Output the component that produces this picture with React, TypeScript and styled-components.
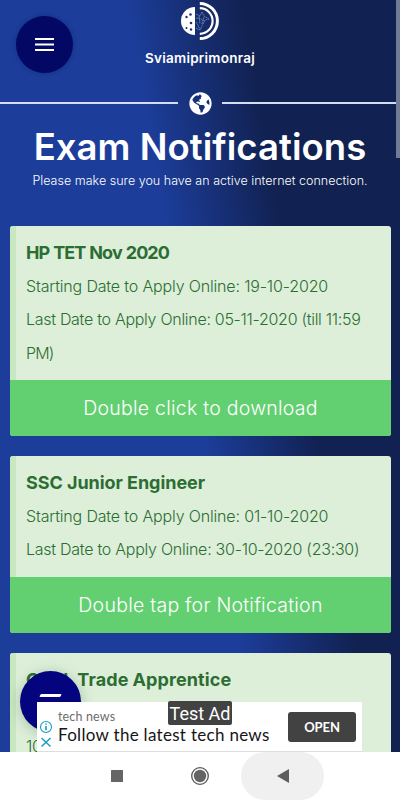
import React from "react";
import styled, { createGlobalStyle } from "styled-components";
import { FaGlobeAmericas } from "react-icons/fa";

const Global = createGlobalStyle`
  * { box-sizing: border-box; }
  html, body { margin: 0; padding: 0; overflow: hidden; }
  body { font-family: Inter, "Open Sans", sans-serif; }
  h1, h2, p { margin: 0; }
  button { font-family: inherit; }
`;

const Screen = styled.div`
  width: 400px;
  height: 800px;
  overflow: hidden;
  display: flex;
  flex-direction: column;
  background: #fff;
`;

const Page = styled.main`
  position: relative;
  height: 752px;
  flex: none;
  overflow: hidden;
  background: linear-gradient(80deg, #1c3d9a 48.5%, #112151 70.5%);
`;

const Header = styled.header`
  display: flex;
  flex-direction: column;
  align-items: center;
  color: #fff;
  height: 226px;
`;

const Logo = styled.svg`
  display: block;
  flex: none;
  width: 42px;
  height: 42px;
`;

const Text = styled.span<{ $size: number; $weight: number; $line: number; $space?: number }>`
  display: block;
  font-size: ${(p) => p.$size}px;
  font-weight: ${(p) => p.$weight};
  line-height: ${(p) => p.$line}px;
  letter-spacing: ${(p) => p.$space ?? 0}px;
  white-space: nowrap;
`;

const Brand = styled(Text)`
  margin-top: 6px;
`;

const Divider = styled.div`
  display: grid;
  grid-template-columns: 178px 1fr 178px;
  align-items: center;
  justify-items: center;
  width: 100%;
  height: 26px;
  margin-top: 22px;
  margin-bottom: 6px;
`;

const Rule = styled.span`
  width: 100%;
  height: 2px;
  background: #d3def3;
`;

const List = styled.section`
  display: flex;
  flex-direction: column;
  gap: 20px;
  padding: 0 9px 0 10px;
`;

const Card = styled.article`
  border-radius: 3px;
  overflow: hidden;
  background: #ddefd9;
  flex: none;
`;

const Info = styled.div<{ $height: number }>`
  height: ${(p) => p.$height}px;
  border-left: 6px solid #c9e7c1;
  padding: 10px 0 0 10px;
  color: #2c6d33;
`;

const Title = styled(Text)<{ $word?: number }>`
  word-spacing: ${(p) => p.$word ?? 0}px;
`;

const Detail = styled(Text)<{ $skip?: number }>`
  margin-top: ${(p) => p.$skip ?? 0}px;
`;

const Download = styled.button`
  display: flex;
  align-items: center;
  justify-content: center;
  width: 100%;
  height: 56px;
  border: 0;
  padding: 0;
  background: #62d071;
  color: #fff;
`;

const MenuButton = styled.button`
  position: absolute;
  left: 16px;
  top: 16px;
  width: 57px;
  height: 57px;
  padding: 0;
  border: 0;
  border-radius: 50%;
  background: #020863;
  box-shadow: 0 0 5px #02086350;
  display: flex;
  align-items: center;
  justify-content: center;
`;

const Fab = styled.button`
  position: absolute;
  left: 20px;
  top: 671px;
  width: 61px;
  height: 61px;
  border: 0;
  border-radius: 50%;
  background: #04047f;
  box-shadow: 0 2px 14px #00400040;
  display: flex;
  justify-content: center;
  align-items: flex-start;
  padding: 23px 0 0;
`;

const FabBar = styled.i`
  width: 21px;
  height: 3px;
  border-radius: 1px;
  background: #fff;
  transform: skewX(-25deg);
`;

const Ad = styled.aside`
  position: absolute;
  left: 37px;
  top: 702px;
  width: 325px;
  height: 50px;
  background: #fff;
  border-bottom: 1px solid #ddd;
  display: flex;
  align-items: center;
  padding: 0 6px 0 2px;
  font-family: Lato, sans-serif;
`;

const AdMarks = styled.svg`
  display: block;
  width: 14px;
  height: 32px;
  align-self: flex-end;
`;

const AdCopy = styled.div`
  flex: 1;
  padding: 1px 0 0 5px;
`;

const Sponsor = styled(Text)`
  color: #6c6c6c;
`;

const Headline = styled(Text)`
  color: #151515;
`;

const Open = styled.button`
  width: 68px;
  height: 30px;
  border: 0;
  border-radius: 3px;
  padding: 0;
  background: #424242;
  color: #fff;
`;

const Badge = styled.div`
  position: absolute;
  left: 131px;
  top: -1px;
  width: 64px;
  height: 24px;
  border-radius: 2px;
  background: #424242;
  color: #fff;
  text-align: center;
  white-space: nowrap;
  font: 400 18px/26px Roboto, sans-serif;
`;

const Scroll = styled.div`
  position: absolute;
  right: 0;
  top: 0;
  width: 4px;
  height: 158px;
  background: #707b98;
`;

const Nav = styled.nav`
  height: 48px;
  display: flex;
  padding-left: 75px;
  background: #fff;
`;

const NavItem = styled.span<{ $active?: boolean }>`
  width: 83px;
  height: 48px;
  border-radius: 26px;
  display: flex;
  align-items: center;
  justify-content: center;
  background: ${(p) => (p.$active ? "#f0f0f0" : "transparent")};
`;

type Line = { text: string; space: number; skip?: number };
type Notice = { title: string; space: number; word?: number; height: number; lines: Line[]; action?: string };

const notices: Notice[] = [
  {
    title: "HP TET Nov 2020",
    space: -0.9,
    word: 0.5,
    height: 154,
    lines: [
      { text: "Starting Date to Apply Online: 19-10-2020", space: -0.16 },
      { text: "Last Date to Apply Online: 05-11-2020 (till 11:59", space: -0.29 },
      { text: "PM)", space: -0.9 },
    ],
    action: "Double click to download",
  },
  {
    title: "SSC Junior Engineer",
    space: -0.05,
    height: 121,
    lines: [
      { text: "Starting Date to Apply Online: 01-10-2020", space: -0.16 },
      { text: "Last Date to Apply Online: 30-10-2020 (23:30)", space: -0.26 },
    ],
    action: "Double tap for Notification",
  },
  {
    title: "CCLL Trade Apprentice",
    space: 0.12,
    word: -0.5,
    height: 154,
    lines: [{ text: "10", space: -0.2, skip: 33.7 }],
  },
];

export default function App() {
  return (
    <Screen>
      <Global />
      <Page>
        <Header>
          <Logo viewBox="0 0 42 42" fill="none">
            <path d="M16 7A14 14 0 0 0 16 35Z" fill="#fff" />
            <g fill="#1b3274">
              <circle cx="7.500" cy="17" r="1.2" />
              <circle cx="11.500" cy="14.500" r="1.3" />
              <circle cx="12" cy="23" r="1.3" />
              <circle cx="7.500" cy="28" r="1" />
              <circle cx="12" cy="29.500" r="1.2" />
            </g>
            <path d="M19 3.400A17.600 17.600 0 0 1 19 38.600" transform="translate(1.800 0)" stroke="#fff" strokeWidth="3" />
            <path d="M19 8.200A12.800 12.800 0 0 1 19 33.800" transform="translate(1.800 0)" stroke="#fff" strokeWidth="2.200" />
            <path
              d="M17 14l4 2 2-4 2 4 5 3-4 1-2 4-3 6-2-5-2-3M17 18l5 1 3 2M20 16l1 8M25 17l-2 7M17 28l3 2"
              stroke="#8b9cc9"
              strokeWidth=".7"
              strokeDasharray="2 .6"
            />
          </Logo>
          <Brand $size={13.5} $weight={600} $line={20} $space={0.25}>Sviamiprimonraj</Brand>
          <Divider>
            <Rule />
            <FaGlobeAmericas size={23} />
            <Rule />
          </Divider>
          <Text as="h1" $size={36.5} $weight={600} $line={50} $space={0.05}>Exam Notifications</Text>
          <Text as="p" $size={12.5} $weight={300} $line={18} $space={0.02}>
            Please make sure you have an active internet connection.
          </Text>
        </Header>
        <List>
          {notices.map((n) => (
            <Card key={n.title}>
              <Info $height={n.height}>
                <Title as="h2" $size={18} $weight={700} $line={33.5} $space={n.space} $word={n.word}>{n.title}</Title>
                {n.lines.map((l) => (
                  <Detail as="p" key={l.text} $size={16} $weight={300} $line={33.7} $space={l.space} $skip={l.skip}>
                    {l.text}
                  </Detail>
                ))}
              </Info>
              {n.action && (
                <Download>
                  <Text $size={19.5} $weight={300} $line={28} $space={0.25}>{n.action}</Text>
                </Download>
              )}
            </Card>
          ))}
        </List>
        <MenuButton aria-label="Menu">
          <svg width="19" height="13" fill="#fff">
            <path d="M0 0H19V2H0ZM0 5.500H19V7.500H0ZM0 11H19V13H0Z" />
          </svg>
        </MenuButton>
        <Scroll />
        <Fab aria-label="More">
          <FabBar />
        </Fab>
        <Ad>
          <AdMarks viewBox="0 0 14 32" fill="none" stroke="#159bc0">
            <circle cx="7" cy="8" r="5.5" strokeWidth="1.1" />
            <path d="M7 7v4.2M7 4.4v1.4" strokeWidth="1.6" />
            <path d="M2.5 19l9 8.500M11.500 19l-9 8.500" strokeWidth="1.4" />
          </AdMarks>
          <AdCopy>
            <Sponsor $size={12.5} $weight={400} $line={16} $space={0.15}>tech news</Sponsor>
            <Headline $size={17} $weight={400} $line={20} $space={0.3}>Follow the latest tech news</Headline>
          </AdCopy>
          <Open>
            <Text $size={13} $weight={700} $line={30} $space={-0.1}>OPEN</Text>
          </Open>
          <Badge>Test Ad</Badge>
        </Ad>
      </Page>
      <Nav>
        <NavItem>
          <svg width="12" height="12"><rect width="12" height="12" rx=".5" fill="#656565" /></svg>
        </NavItem>
        <NavItem>
          <svg width="18" height="18">
            <circle cx="9" cy="9" r="8.300" fill="none" stroke="#555" strokeWidth="1.300" />
            <circle cx="9" cy="9" r="6.200" fill="#656565" />
          </svg>
        </NavItem>
        <NavItem $active>
          <svg width="12" height="14"><path d="M0 7L12 0V14Z" fill="#5d5d5d" /></svg>
        </NavItem>
      </Nav>
    </Screen>
  );
}
